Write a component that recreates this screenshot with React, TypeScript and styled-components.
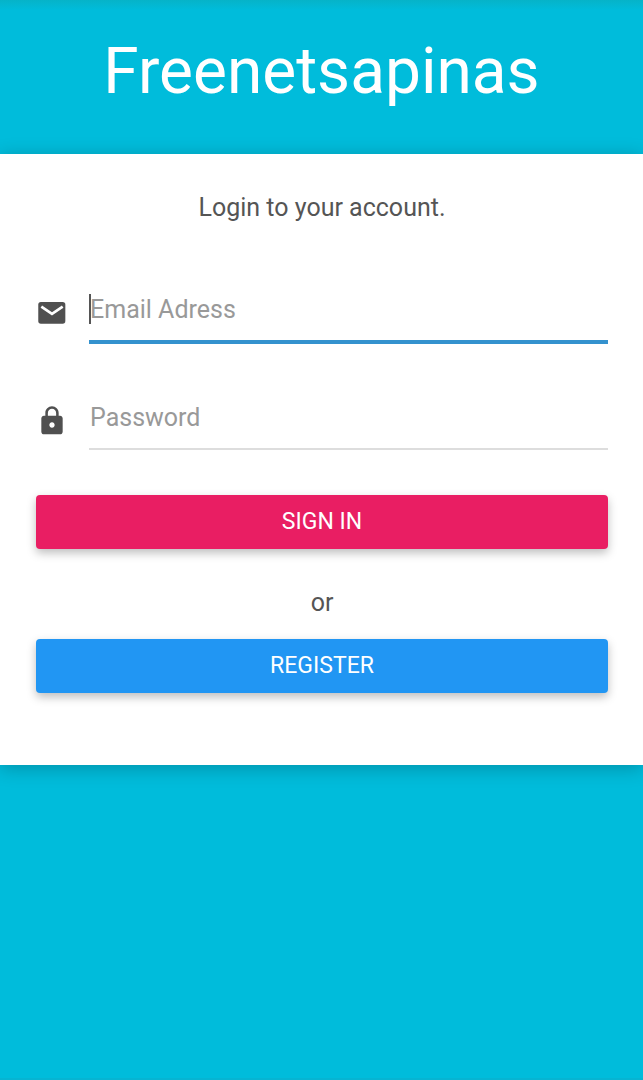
import React from "react";
import styled, { createGlobalStyle } from "styled-components";

const GlobalStyle = createGlobalStyle`
  *, *::before, *::after { box-sizing: border-box; }
  body {
    margin: 0;
    background: #00bcdb;
    color: #555;
    font-family: Roboto, "Liberation Sans", sans-serif;
    font-size: 25px;
  }
`;

const Page = styled.main`
  min-height: 100vh;
  background: linear-gradient(#06b3c8, #00bcdb 10px);
  box-shadow: inset 0 -2px 0 #06b4d2;
`;

const Brand = styled.h1`
  margin: 0;
  padding: 32px 16px 42px;
  color: #fff;
  font-size: 64px;
  font-weight: 400;
  line-height: 80px;
  text-align: center;
`;

const Card = styled.form`
  display: flex;
  flex-direction: column;
  padding: 36px 35px 72px 36px;
  background: #fff;
  box-shadow: 0 3px 18px rgba(0, 0, 0, 0.24);
`;

const Message = styled.p`
  margin: 0 0 8px;
  line-height: 36px;
  text-align: center;
`;

const Field = styled.label`
  display: flex;
  align-items: center;
  gap: 21px;
  margin-top: 44px;
`;

const FieldIcon = styled.svg`
  flex: none;
  width: 32px;
  height: 32px;
  margin-top: 6px;
  fill: #505050;
`;

const InputWrap = styled.span`
  position: relative;
  display: flex;
  flex: 1;
  min-width: 0;
`;

const Input = styled.input`
  flex: 1;
  min-width: 0;
  height: 64px;
  padding: 0 0 0 1px;
  border: 0;
  border-bottom: 2px solid #ddd;
  border-radius: 0;
  outline: 0;
  background: transparent;
  color: #555;
  font: inherit;
  &::placeholder { color: #999; opacity: 1; }
  &:focus {
    border-bottom-color: #3492ce;
    box-shadow: 0 2px 0 #3492ce;
  }
  &:focus:placeholder-shown { caret-color: transparent; }
`;

const Caret = styled.span`
  position: absolute;
  top: 16px;
  left: 0;
  display: none;
  width: 2px;
  height: 30px;
  background: #555;
  pointer-events: none;
  ${Input}:focus:placeholder-shown + & { display: block; }
`;

const Button = styled.button<{ $color: string }>`
  height: 54px;
  padding: 0 24px 2px;
  border: 0;
  border-radius: 4px;
  background: ${(p) => p.$color};
  box-shadow: 0 4px 10px rgba(0, 0, 0, 0.26);
  color: #fff;
  font: inherit;
  font-size: 23px;
`;

const Actions = styled.div`
  display: flex;
  flex-direction: column;
  margin-top: 45px;
`;

const Divider = styled.p`
  margin: 36px 0 18px;
  line-height: 36px;
  text-align: center;
`;

export default function App() {
  return (
    <>
      <GlobalStyle />
      <Page>
        <Brand>Freenetsapinas</Brand>
        <Card onSubmit={(e: React.FormEvent) => e.preventDefault()}>
          <Message>Login to your account.</Message>
          <Field>
            <FieldIcon viewBox="0 0 24 24" aria-hidden="true">
              <rect x="1.700" y="3.700" width="20.300" height="16.300" rx="2" />
              <path d="M4 7.200l8 5.400 8-5.400" fill="none" stroke="#fff" strokeWidth="2" />
            </FieldIcon>
            <InputWrap>
              <Input type="email" placeholder="Email Adress" aria-label="Email Adress" autoFocus />
              <Caret />
            </InputWrap>
          </Field>
          <Field>
            <FieldIcon viewBox="0 0 24 24" aria-hidden="true">
              <path d="M18 8h-1V6c0-2.760-2.240-5-5-5S7 3.240 7 6v2H6c-1.100 0-2 .9-2 2v10c0 1.100.9 2 2 2h12c1.100 0 2-.9 2-2V10c0-1.100-.9-2-2-2zm-6 9c-1.100 0-2-.9-2-2s.9-2 2-2 2 .9 2 2-.9 2-2 2zm3.100-9H8.900V6c0-1.710 1.390-3.100 3.100-3.100s3.100 1.390 3.100 3.100v2z" />
            </FieldIcon>
            <InputWrap>
              <Input type="password" placeholder="Password" aria-label="Password" />
              <Caret />
            </InputWrap>
          </Field>
          <Actions>
            <Button type="submit" $color="#e91e63">SIGN IN</Button>
            <Divider>or</Divider>
            <Button type="button" $color="#2196f3">REGISTER</Button>
          </Actions>
        </Card>
      </Page>
    </>
  );
}
